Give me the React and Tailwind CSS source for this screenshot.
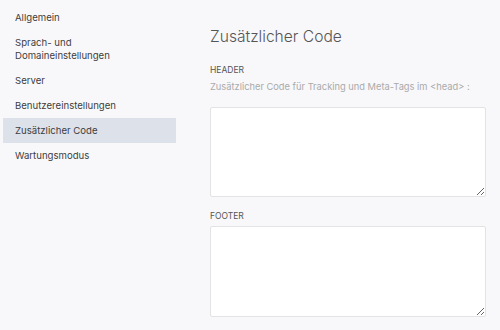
import React from "react";

const items = [
  "Allgemein",
  "Sprach- und Domaineinstellungen",
  "Server",
  "Benutzereinstellungen",
  "Zusätzlicher Code",
  "Wartungsmodus",
];

export default function App() {
  return (
    <div className="w-[500px] h-[330px] bg-[#f8f8fa] flex overflow-hidden" style={{ fontFamily: "Inter, 'Noto Sans', sans-serif" }}>
      <div className="w-[190px] shrink-0 pt-[5px] pl-[3px] flex flex-col">
        {items.map((it) => (
          <div
            key={it}
            className={`w-[173px] px-3 py-[6px] text-[9.6px] leading-[13px] text-[#3d3d3d] ${it === "Zusätzlicher Code" ? "bg-[#dde2ea]" : ""}`}
          >
            {it === "Sprach- und Domaineinstellungen" ? (
              <>Sprach- und<br />Domaineinstellungen</>
            ) : (
              it
            )}
          </div>
        ))}
      </div>
      <div className="flex-1 min-w-0 pl-[20px] pr-[14px] pt-[26px] flex flex-col">
        <div className="text-[15.6px] leading-[22px] font-light text-[#555]">Zusätzlicher Code</div>
        <div className="mt-[16px] text-[8.5px] leading-[12px] text-[#555] uppercase">Header</div>
        <div className="mt-[4px] text-[9.3px] leading-[14px] text-[#aaa] whitespace-nowrap">Zusätzlicher Code für Tracking und Meta-Tags im &lt;head&gt; :</div>
        <textarea className="mt-[13px] h-[90px] w-full bg-white border border-[#e3e3e6] rounded-[2px] resize-y block" />
        <div className="mt-[13px] text-[8.5px] leading-[12px] text-[#555] uppercase">Footer</div>
        <textarea className="mt-[4px] h-[91px] w-full bg-white border border-[#e3e3e6] rounded-[2px] resize-y block" />
      </div>
    </div>
  );
}
